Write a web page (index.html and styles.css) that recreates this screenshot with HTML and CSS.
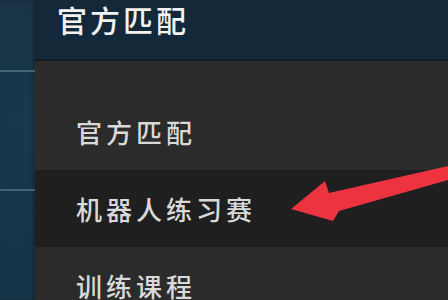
FILE: index.html
```html
<!DOCTYPE html>
<html lang="zh">
<head>
<meta charset="utf-8">
<link rel="stylesheet" href="styles.css">
</head>
<body>
<div class="screen">
  <aside class="rail">
    <div class="rail-line rail-line-1"></div>
    <div class="rail-line rail-line-2"></div>
  </aside>
  <main class="main">
    <header class="header"><span class="title">官方匹配</span></header>
    <ul class="menu">
      <li class="item">官方匹配</li>
      <li class="item item-active">机器人练习赛</li>
      <li class="item">训练课程</li>
    </ul>
  </main>
  <svg class="arrow" width="448" height="300" viewBox="0 0 448 300">
    <polygon points="291,209 325,181 329,193 448,166 448,180 339,211 333,221" fill="#ee3340"/>
  </svg>
</div>
</body>
</html>
```
FILE: styles.css
```css
* { box-sizing: border-box; }
html, body { margin: 0; padding: 0; }
body {
  width: 448px;
  height: 300px;
  overflow: hidden;
  background: #2b2b2b;
  font-family: "Noto Sans CJK SC", "Noto Sans", sans-serif;
}
.screen {
  position: relative;
  display: flex;
  width: 448px;
  height: 300px;
  overflow: hidden;
}
.rail {
  width: 35px;
  flex: none;
  background: linear-gradient(180deg, #1a3446 0%, #18384c 40%, #163448 100%);
  box-shadow: inset -2px 0 3px rgba(0,0,0,0.25);
  display: flex;
  flex-direction: column;
}
.rail-line {
  height: 2px;
  background: #4f6f80;
  opacity: 0.8;
  flex: none;
}
.rail-line-1 { margin-top: 70px; }
.rail-line-2 { margin-top: 117px; }
.main {
  flex: 1;
  display: flex;
  flex-direction: column;
  min-height: 0;
  overflow: hidden;
}
.header {
  flex: none;
  height: 61px;
  background: #132939;
  border-bottom: 2px solid #0f1d22;
  padding-left: 22px;
  display: flex;
  align-items: flex-start;
}
.title {
  color: #f2f2f2;
  font-size: 30px;
  font-weight: 500;
  letter-spacing: 3px;
  line-height: 38px;
}
.menu {
  list-style: none;
  margin: 0;
  padding: 32px 0 0 0;
  background: #2b2b2b;
  flex: none;
}
.item {
  height: 77px;
  display: flex;
  align-items: center;
  padding-left: 41px;
  color: #d9d9d9;
  font-size: 26px;
  font-weight: 500;
  letter-spacing: 4px;
}
.item-active {
  background: #1f1f1f;
}
.arrow {
  position: absolute;
  left: 0;
  top: 0;
}
```
